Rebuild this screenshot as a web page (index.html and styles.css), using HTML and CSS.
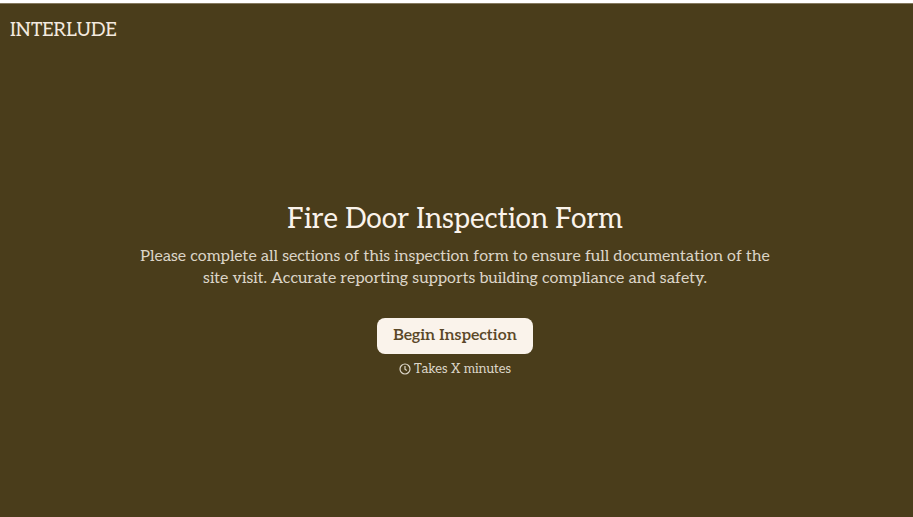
FILE: index.html
```html
<!DOCTYPE html>
<html lang="en">
<head>
<meta charset="utf-8">
<meta name="viewport" content="width=device-width, initial-scale=1">
<title>Fire Door Inspection Form</title>
<link rel="stylesheet" href="styles.css">
</head>
<body>
<header class="header"><a class="brand" href="#">INTERLUDE</a></header>
<main class="welcome">
<h1 class="title">Fire Door Inspection Form</h1>
<p class="description">Please complete all sections of this inspection form to ensure full documentation of the site visit. Accurate reporting supports building compliance and safety.</p>
<button class="begin" type="button">Begin Inspection</button>
<p class="duration">
<svg class="clock" viewBox="0 0 12 12" aria-hidden="true"><circle cx="6" cy="6" r="5"/><path d="M6 3v3.2l1.8 1.2"/></svg>
<span>Takes X minutes</span>
</p>
</main>
</body>
</html>
```
FILE: styles.css
```css
* {
  box-sizing: border-box;
}

body {
  display: flex;
  flex-direction: column;
  min-height: 100vh;
  margin: 0;
  border-top: 3px solid #fff;
  background: #4a3d1b;
  box-shadow: inset 0 1px #85795f;
  color: #faf3eb;
  font-family: Aleo, "Noto Serif", "DejaVu Serif", "Liberation Serif", serif;
}

.header {
  padding: 16px 10px;
}

.brand {
  color: #f3e9df;
  font-size: 19px;
  line-height: 24px;
  text-decoration: none;
}

.welcome {
  display: flex;
  flex: 1;
  flex-direction: column;
  align-items: center;
  justify-content: center;
  padding: 4px 27px 0 24px;
  text-align: center;
}

.title {
  margin: 0 0 8px;
  font-size: 28px;
  font-weight: 400;
  line-height: 36px;
}

.description {
  max-width: 656px;
  margin: 0 0 28px;
  color: #dcd5c8;
  font-size: 16px;
  line-height: 22px;
}

.begin {
  padding: 6px 16px;
  border: 0;
  border-radius: 8px;
  background: #faf3eb;
  color: #5a4828;
  font: inherit;
  font-size: 16px;
  font-weight: 600;
  line-height: 24px;
}

.duration {
  display: flex;
  align-items: center;
  gap: 3px;
  margin: 6px 0 0;
  color: #dcd5c8;
  font-size: 13px;
  line-height: 18px;
}

.clock {
  width: 12px;
  height: 12px;
  fill: none;
  stroke: currentColor;
  stroke-width: 1.2;
}
```
